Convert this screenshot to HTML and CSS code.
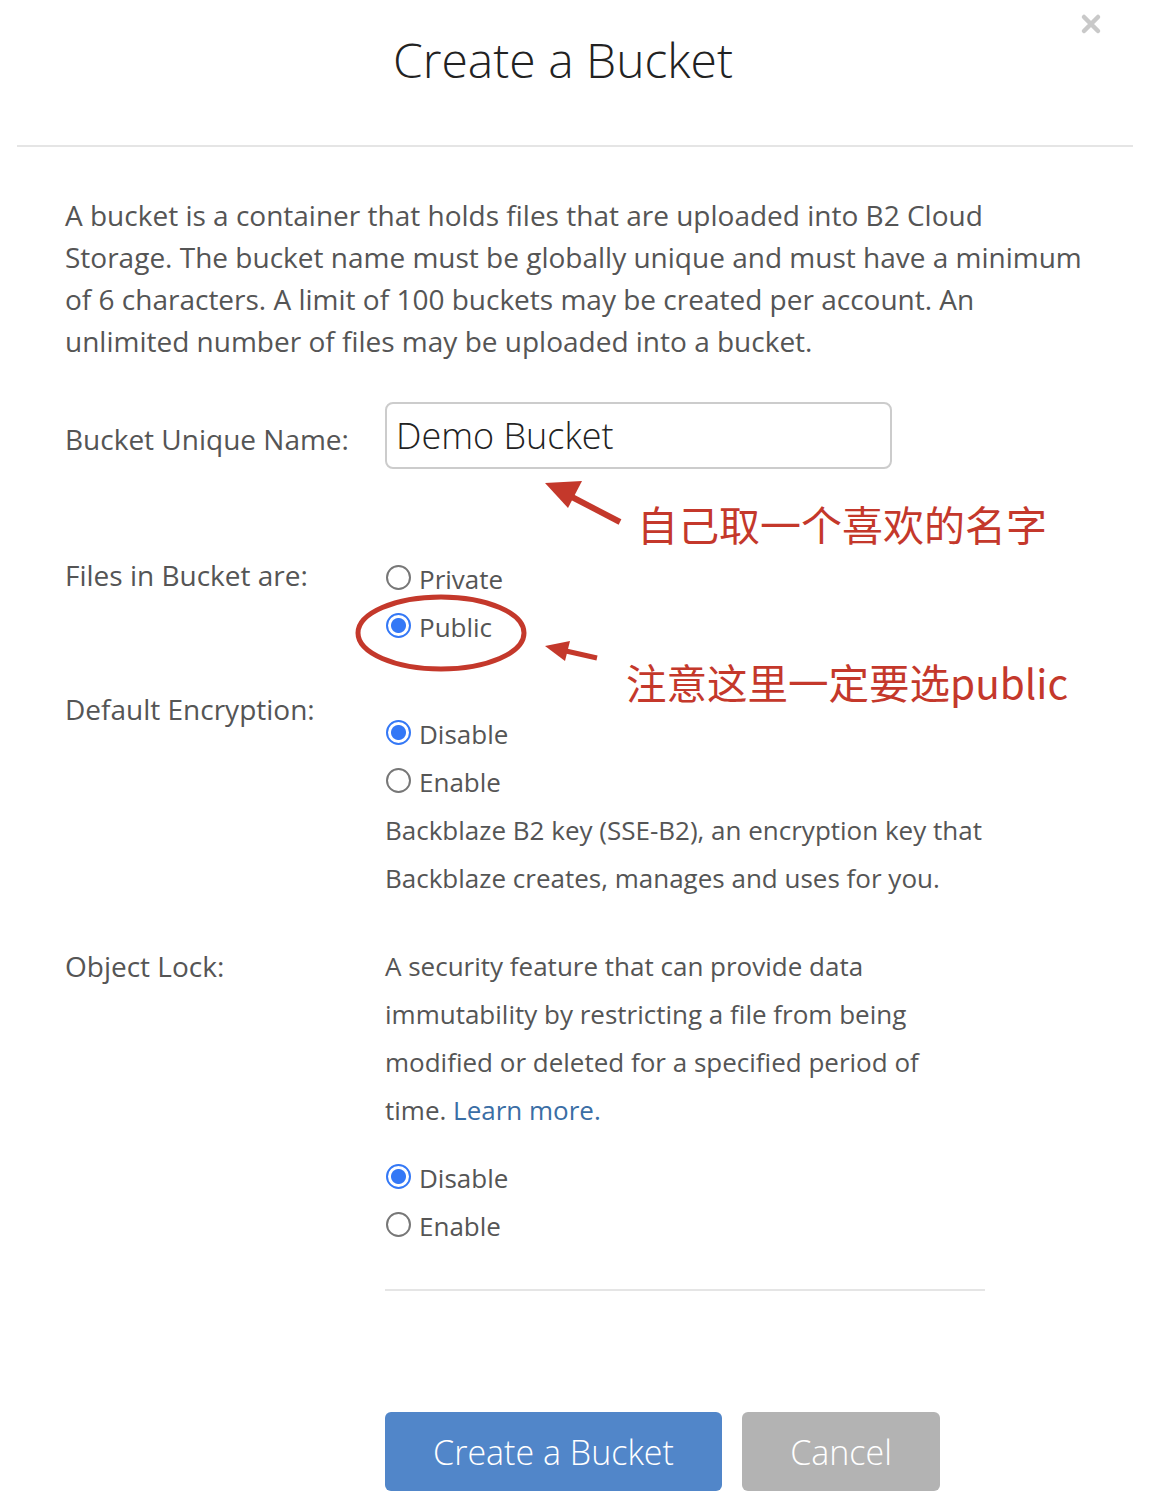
FILE: index.html
```html
<!DOCTYPE html>
<html lang="en">
<head>
    <meta charset="UTF-8">
    <title>Create a Bucket</title>
    <link rel="stylesheet" href="styles.css">
</head>
<body>
    <div class="modal">
        <div class="modal-header">
            <h1>Create a Bucket</h1>
            <button class="close" aria-label="Close">
                <svg width="22" height="22" viewBox="0 0 22 22"><path d="M4 4 L18 18 M18 4 L4 18" stroke="#c9c9c9" stroke-width="4.5" stroke-linecap="round"/></svg>
            </button>
        </div>

        <div class="modal-body">
            <p class="intro">A bucket is a container that holds files that are uploaded into B2 Cloud Storage. The bucket name must be globally unique and must have a minimum of 6 characters. A limit of 100 buckets may be created per account. An unlimited number of files may be uploaded into a bucket.</p>

            <div class="row row-name">
                <label class="row-label" for="bucketName">Bucket Unique Name:</label>
                <div class="row-control">
                    <input id="bucketName" class="text-input" type="text" value="Demo Bucket">
                </div>
            </div>

            <div class="row row-files">
                <div class="row-label">Files in Bucket are:</div>
                <div class="row-control">
                    <label class="radio"><input type="radio" name="files"> Private</label>
                    <label class="radio"><input type="radio" name="files" checked> Public</label>
                </div>
            </div>

            <div class="row row-enc">
                <div class="row-label">Default Encryption:</div>
                <div class="row-control">
                    <label class="radio"><input type="radio" name="enc" checked> Disable</label>
                    <label class="radio"><input type="radio" name="enc"> Enable</label>
                    <p class="help">Backblaze B2 key (SSE-B2), an encryption key that Backblaze creates, manages and uses for you.</p>
                </div>
            </div>

            <div class="row row-lock">
                <div class="row-label">Object Lock:</div>
                <div class="row-control">
                    <p class="help">A security feature that can provide data immutability by restricting a file from being modified or deleted for a specified period of time. <a href="#">Learn more.</a></p>
                    <div class="radio-group">
                        <label class="radio"><input type="radio" name="lock" checked> Disable</label>
                        <label class="radio"><input type="radio" name="lock"> Enable</label>
                    </div>
                    <hr class="divider">
                </div>
            </div>

            <div class="actions">
                <button class="btn btn-primary">Create a Bucket</button>
                <button class="btn btn-cancel">Cancel</button>
            </div>
        </div>

        <!-- annotations drawn over the screenshot -->
        <svg class="marks" width="1160" height="1500" viewBox="0 0 1160 1500">
            <g fill="#c4382b" stroke="#c4382b">
                <line x1="620" y1="522" x2="570" y2="496" stroke-width="6"/>
                <polygon points="545,483 582,481 568,508" stroke="none"/>
                <line x1="597" y1="658" x2="566" y2="651" stroke-width="5"/>
                <polygon points="545,646 570,641 565,661" stroke="none"/>
                <ellipse cx="441" cy="633" rx="83" ry="36" fill="none" stroke-width="5"/>
            </g>
        </svg>
        <div class="note note-name">自己取一个喜欢的名字</div>
        <div class="note note-public">注意这里一定要选 public</div>
    </div>
</body>
</html>
```

FILE: styles.css
```css
* {
    margin: 0;
    padding: 0;
    box-sizing: border-box;
    font-family: 'Open Sans', 'Noto Sans', sans-serif;
}

body {
    background-color: #fff;
    width: 1160px;
}

.modal {
    position: relative;
    min-height: 1500px;
}

.modal-header {
    height: 147px;
    margin: 0 27px 0 17px;
    border-bottom: 2px solid #e5e5e5;
    display: flex;
    justify-content: center;
    padding-top: 28px;
}

h1 {
    font-size: 48px;
    font-weight: 300;
    color: #222;
    line-height: 64px;
    padding-right: 24px;
}

.close {
    position: absolute;
    top: 13px;
    left: 1080px;
    background: none;
    border: none;
    cursor: pointer;
}

.modal-body {
    padding: 47px 65px 0 65px;
}

.intro {
    font-size: 28px;
    line-height: 42px;
    color: #555;
    width: 1030px;
}

.row {
    display: grid;
    grid-template-columns: 320px 1fr;
}

.row-label {
    font-size: 28px;
    color: #555;
    line-height: 40px;
}

.row-control {
    width: 600px;
}

.row-name {
    margin-top: 40px;
}

.row-name .row-label {
    padding-top: 17px;
}

.text-input {
    width: 507px;
    height: 67px;
    border: 2px solid #ccc;
    border-radius: 8px;
    padding: 0 9px;
    font-size: 36px;
    font-weight: 300;
    color: #222;
    outline: none;
}

.row-files {
    margin-top: 86px;
}

.radio {
    display: flex;
    align-items: center;
    gap: 8px;
    height: 48px;
    font-size: 26px;
    color: #555;
}

.radio input {
    appearance: none;
    width: 25px;
    height: 25px;
    border: 2px solid #777;
    border-radius: 50%;
    margin-left: 1px;
    margin-top: -4px;
    flex-shrink: 0;
}

.radio input:checked {
    border: 2px solid #3478f6;
    background: radial-gradient(circle, #3478f6 0, #3478f6 7px, #fff 8px);
}

.row-enc {
    margin-top: 38px;
}

.row-enc .row-control {
    padding-top: 21px;
}

.help {
    font-size: 26px;
    line-height: 48px;
    color: #555;
    width: 600px;
}

.row-lock .help {
    width: 580px;
}

.help a {
    color: #3a6ea5;
    text-decoration: none;
}

.row-lock {
    margin-top: 40px;
}

.row-lock .row-label {
    padding-top: 4px;
}

.radio-group {
    margin-top: 20px;
}

.divider {
    border: none;
    border-top: 2px solid #e5e5e5;
    margin-top: 39px;
}

.actions {
    display: flex;
    gap: 20px;
    margin-top: 121px;
    padding-left: 320px;
}

.btn {
    height: 79px;
    border: none;
    border-radius: 6px;
    color: #fff;
    font-size: 34px;
    font-weight: 300;
    cursor: pointer;
}

.btn-primary {
    width: 337px;
    background-color: #5186c9;
}

.btn-cancel {
    width: 198px;
    background-color: #b3b3b3;
}

.marks {
    position: absolute;
    top: 0;
    left: 0;
    pointer-events: none;
}

.note {
    position: absolute;
    font-family: 'Noto Sans CJK SC', 'Open Sans', sans-serif;
    font-size: 41px;
    line-height: 50px;
    color: #c4382b;
    white-space: nowrap;
}

.note-name {
    top: 498px;
    left: 637px;
}

.note-public {
    top: 657px;
    left: 626px;
    font-size: 40.5px;
    word-spacing: -9px;
}
```
